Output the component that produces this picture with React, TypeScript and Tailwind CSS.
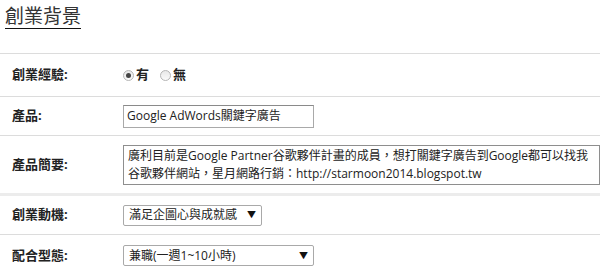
import React from "react";

const font = {
  fontFamily: '"Open Sans", "Noto Sans CJK TC", sans-serif',
};

const Row = ({
  label,
  className,
  children,
}: {
  label: string;
  className: string;
  children: React.ReactNode;
}) => (
  <div className={`flex items-center border-t border-[#dcdcdc] ${className}`}>
    <div className="w-[123px] pl-[12px] text-[13px] font-bold text-[#222]">
      {label}
    </div>
    <div className="flex-1 flex items-center">{children}</div>
  </div>
);

const Radio = ({ checked }: { checked?: boolean }) => (
  <span className="inline-flex h-[11px] w-[11px] items-center justify-center rounded-full border border-[#b5b5b5] bg-gradient-to-b from-[#e8e8e8] to-[#fafafa]">
    {checked && <span className="h-[5px] w-[5px] rounded-full bg-[#444]" />}
  </span>
);

const Select = ({ value, width }: { value: string; width: string }) => (
  <div
    className={`flex h-[21px] items-center justify-between whitespace-nowrap rounded-[2px] border border-[#a9a9a9] bg-white pl-[5px] pr-[5px] text-[12px] text-[#222] ${width}`}
  >
    <span>{value}</span>
    <span className="text-[9px] text-[#111]">▼</span>
  </div>
);

export default function App() {
  return (
    <div className="h-[278px] w-[600px] overflow-hidden bg-white" style={font}>
      <div className="pl-[5px] pt-[4px] h-[53px]">
        <span className="inline-block border-b border-[#111] text-[19px] leading-[24px] text-[#333]">
          創業背景
        </span>
      </div>
      <Row label="創業經驗:" className="h-[43px]">
        <div className="flex items-center gap-[2px] text-[13px] font-bold text-[#222]">
          <Radio checked />
          <span className="mr-[9px]">有</span>
          <Radio />
          <span>無</span>
        </div>
      </Row>
      <Row label="產品:" className="h-[39px]">
        <div className="flex h-[23px] w-[191px] items-center whitespace-nowrap border border-[#a9a9a9] border-t-[#8a8a8a] pl-[3px] text-[12px] text-[#222]">
          Google AdWords關鍵字廣告
        </div>
      </Row>
      <Row label="產品簡要:" className="h-[61px] border-b-[3px] border-b-[#ececec]">
        <div className="flex h-[40px] flex-1 flex-col justify-center whitespace-nowrap border border-[#8e8e8e] pl-[4px] text-[12px] leading-[18px] text-[#222]">
          <div>廣利目前是Google Partner谷歌夥伴計畫的成員，想打關鍵字廣告到Google都可以找我</div>
          <div>谷歌夥伴網站，星月網路行銷：http://starmoon2014.blogspot.tw</div>
        </div>
      </Row>
      <Row label="創業動機:" className="h-[38px] border-t-0">
        <Select value="滿足企圖心與成就感" width="w-[139px]" />
      </Row>
      <Row label="配合型態:" className="h-[42px]">
        <Select value="兼職(一週1~10小時)" width="w-[191px]" />
      </Row>
    </div>
  );
}
